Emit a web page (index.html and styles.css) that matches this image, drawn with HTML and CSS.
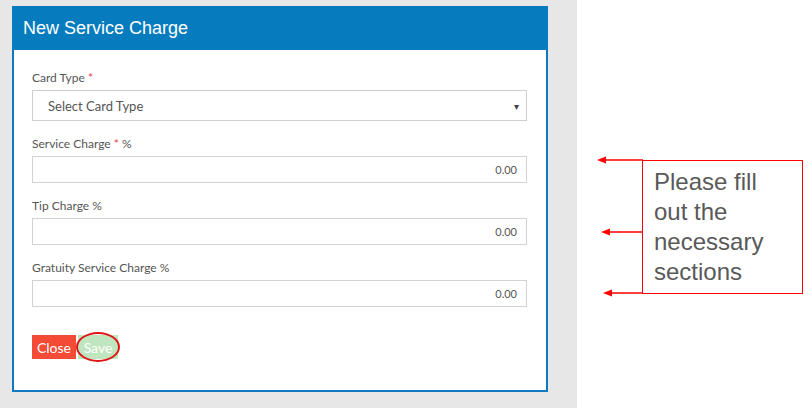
FILE: index.html
```html
<!DOCTYPE html>
<html>
<head>
<meta charset="utf-8">
<link rel="stylesheet" href="styles.css">
</head>
<body>
<div class="page">
  <div class="backdrop">
    <div class="modal">
      <div class="modal-header">New Service Charge</div>
      <div class="modal-body">
        <div class="group group-select">
          <div class="label">Card Type <span class="req">*</span></div>
          <div class="select"><span>Select Card Type</span><span class="caret">&#9662;</span></div>
        </div>
        <div class="group">
          <div class="label">Service Charge <span class="req">*</span> %</div>
          <div class="input">0.00</div>
        </div>
        <div class="group">
          <div class="label">Tip Charge %</div>
          <div class="input">0.00</div>
        </div>
        <div class="group">
          <div class="label">Gratuity Service Charge %</div>
          <div class="input">0.00</div>
        </div>
        <div class="actions">
          <button class="btn btn-close">Close</button>
          <button class="btn btn-save">Save<span class="ring"></span></button>
        </div>
      </div>
    </div>
  </div>
  <div class="notes">
    <svg class="arrows" width="234" height="408" viewBox="0 0 234 408">
      <g stroke="#ff0000" stroke-width="1.5" fill="none">
        <line x1="26" y1="160" x2="66" y2="160"/>
        <line x1="30" y1="232" x2="66" y2="232"/>
        <line x1="32" y1="293" x2="66" y2="293"/>
      </g>
      <g fill="#ff0000">
        <polygon points="20,160 29,156.5 29,163.5"/>
        <polygon points="24,232 33,228.5 33,235.5"/>
        <polygon points="26,293 35,289.5 35,296.5"/>
      </g>
    </svg>
    <div class="callout">Please fill out the necessary sections</div>
  </div>
</div>
</body>
</html>
```

FILE: styles.css
```css
* { box-sizing: border-box; }
html, body { margin: 0; padding: 0; background: #ffffff; }
.page {
  display: flex;
  width: 811px;
  height: 408px;
}
.backdrop {
  width: 577px;
  height: 408px;
  background: #e7e7e7;
  padding: 6px 0 0 12px;
}
.modal {
  width: 536px;
  height: 386px;
  display: flex;
  flex-direction: column;
  background: #ffffff;
}
.modal-header {
  height: 44px;
  background: #067cbf;
  color: #ffffff;
  font-family: "Liberation Sans", Arial, sans-serif;
  font-size: 18px;
  line-height: 44px;
  padding-left: 11px;
}
.modal-body {
  flex: 1;
  border: 2px solid #0b7ac0;
  border-top: 0;
  padding: 19px 19px 0 18px;
  font-family: Lato, "Open Sans", sans-serif;
}
.group { margin-bottom: 14px; }
.label {
  font-size: 12px;
  line-height: 17px;
  color: #555555;
  margin-bottom: 4px;
}
.req { color: #e8383d; }
.select {
  height: 31px;
  border: 1px solid #cfcfcf;
  display: flex;
  align-items: center;
  justify-content: space-between;
  padding: 0 7px 0 15px;
  font-size: 13px;
  color: #555555;
}
.caret { font-size: 10px; color: #444; }
.input {
  height: 27px;
  border: 1px solid #d2d2d2;
  display: flex;
  align-items: center;
  justify-content: flex-end;
  padding-right: 9px;
  font-size: 11px;
  color: #555555;
}
.actions {
  display: flex;
  gap: 2px;
  margin-top: 28px;
}
.btn {
  border: 0;
  height: 24px;
  font-family: Lato, "Open Sans", sans-serif;
  font-size: 14px;
  color: #ffffff;
  padding: 0;
  position: relative;
}
.btn-close { width: 44px; background: #f44b36; }
.btn-save { width: 40px; background: #bfe6be; }
.ring {
  position: absolute;
  left: -2px;
  top: -3px;
  width: 44px;
  height: 30px;
  border: 2px solid #e01515;
  border-radius: 50%;
}
.notes {
  position: relative;
  flex: 1;
  padding: 160px 0 0 65px;
}
.arrows { position: absolute; left: 0; top: 0; }
.callout {
  position: relative;
  width: 161px;
  height: 134px;
  border: 1px solid #ff0000;
  padding: 6px 30px 0 11px;
  font-family: "Liberation Sans", Arial, sans-serif;
  font-size: 24px;
  line-height: 30px;
  color: #595959;
}
```
